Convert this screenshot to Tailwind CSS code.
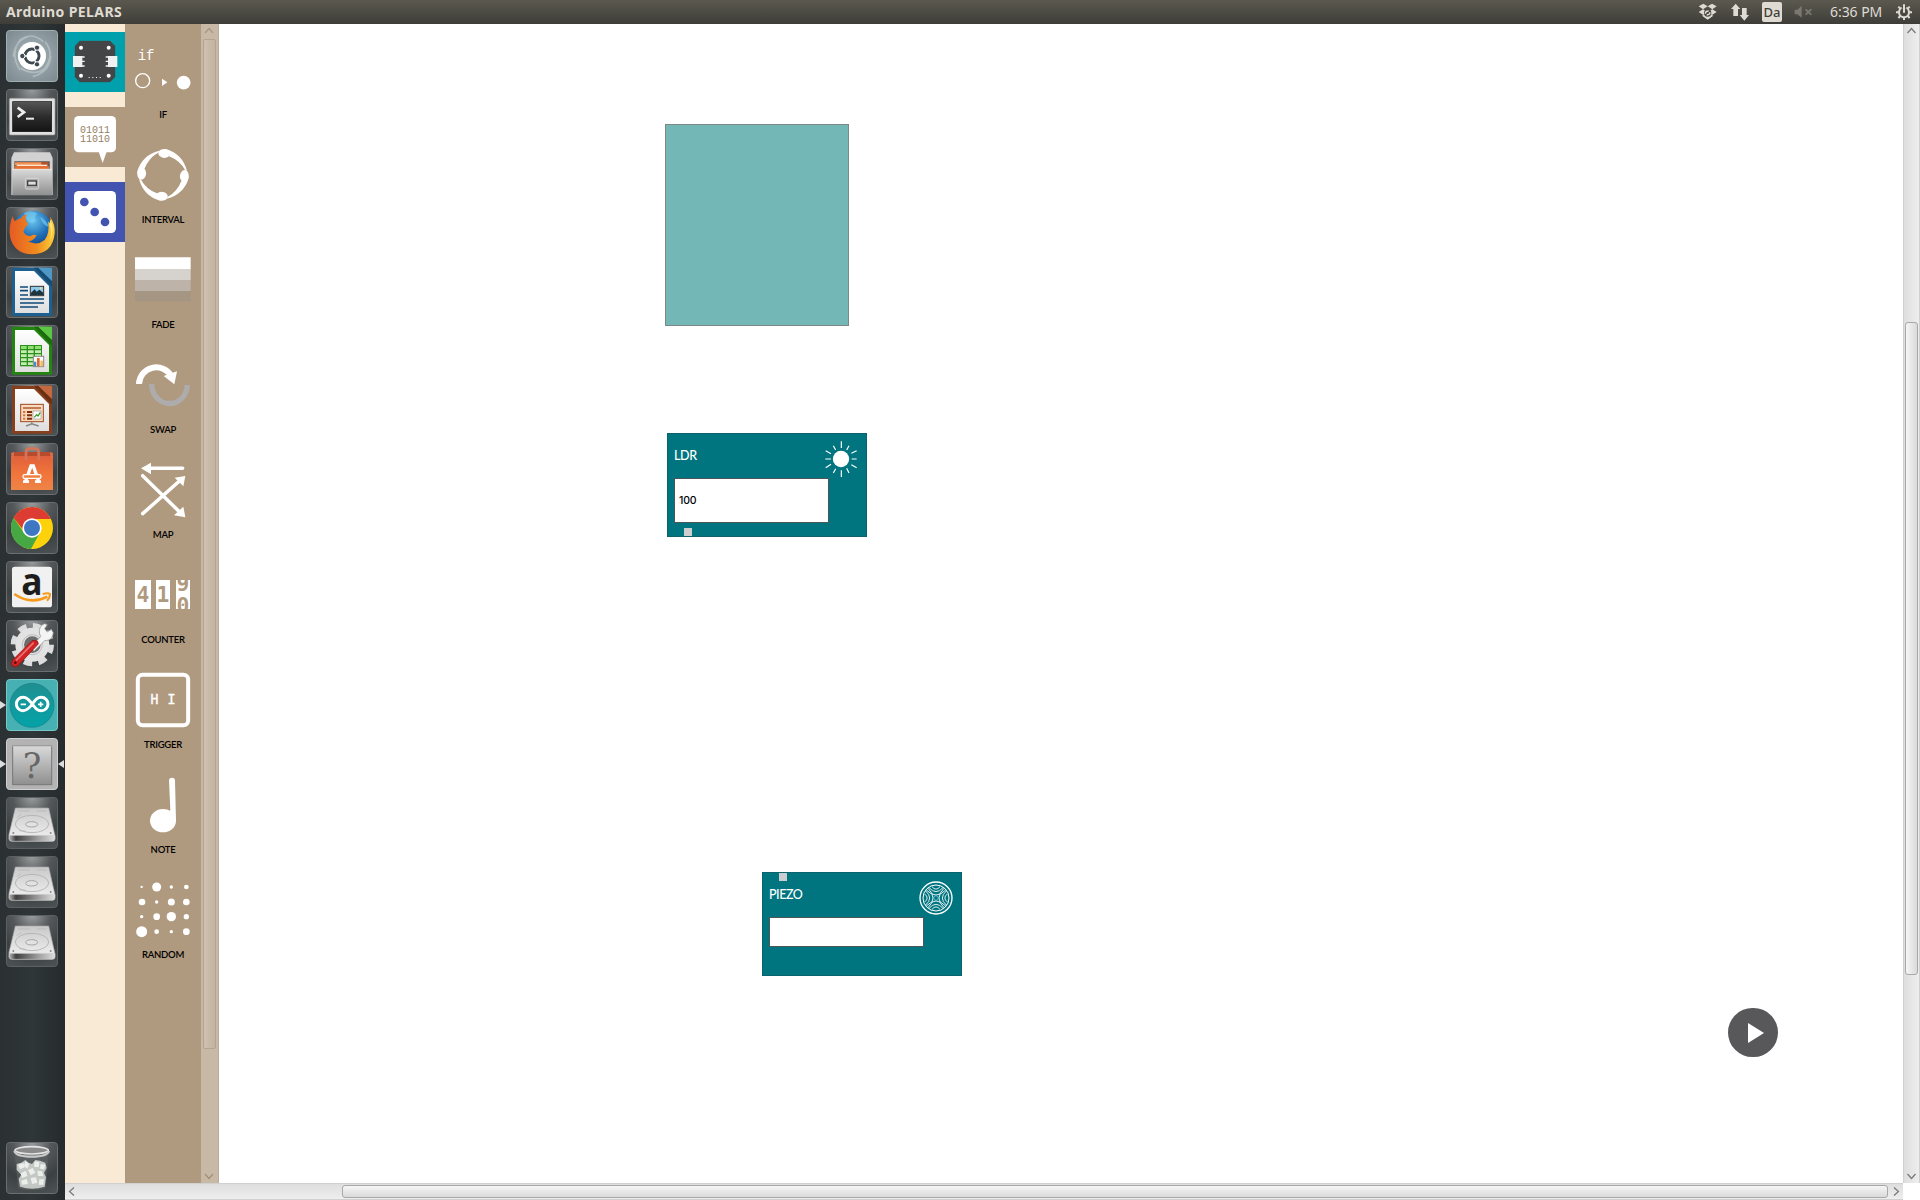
<!DOCTYPE html>
<html lang="en">
<head>
<meta charset="utf-8">
<title>Arduino PELARS</title>
<script src="https://cdn.jsdelivr.net/npm/@tailwindcss/browser@4"></script>
</head>
<body class="w-[1920px] h-[1200px] overflow-hidden bg-white flex flex-col">

<!-- shared gradients and symbols -->
<svg class="absolute w-0 h-0" aria-hidden="true">
  <defs>
    <radialGradient id="tileDark" cx=".5" cy="0" r="1.05"><stop offset="0" stop-color="#9a9d9e"/><stop offset=".35" stop-color="#54585a"/><stop offset=".7" stop-color="#3b4043"/><stop offset="1" stop-color="#4b5052"/></radialGradient>
    <radialGradient id="tileDash" cx=".5" cy=".5" r=".75"><stop offset="0" stop-color="#a9b5b9"/><stop offset="1" stop-color="#77868c"/></radialGradient>
    <linearGradient id="paper" x1="0" y1="0" x2="0" y2="1"><stop offset="0" stop-color="#fff"/><stop offset="1" stop-color="#dedede"/></linearGradient>
    <linearGradient id="plate" x1="0" y1="0" x2="0" y2="1"><stop offset="0" stop-color="#c9c9c9"/><stop offset="1" stop-color="#ececec"/></linearGradient>
    <linearGradient id="metal" x1="0" y1="0" x2="0" y2="1"><stop offset="0" stop-color="#d9d9d9"/><stop offset="1" stop-color="#8f8f8f"/></linearGradient>
    <linearGradient id="screen" x1="0" y1="0" x2="0" y2="1"><stop offset="0" stop-color="#555"/><stop offset=".5" stop-color="#2c2c2c"/><stop offset="1" stop-color="#141414"/></linearGradient>
    <linearGradient id="bag" x1="0" y1="0" x2="0" y2="1"><stop offset="0" stop-color="#e0603c"/><stop offset=".5" stop-color="#f0743a"/><stop offset="1" stop-color="#ef8447"/></linearGradient>
    <radialGradient id="globe" cx=".5" cy=".25" r=".8"><stop offset="0" stop-color="#6bc6f0"/><stop offset=".5" stop-color="#1f6fb8"/><stop offset="1" stop-color="#0e2f6e"/></radialGradient>
    <linearGradient id="fox" x1="0" y1="0" x2="1" y2="0"><stop offset="0" stop-color="#e55b23"/><stop offset=".6" stop-color="#f08b1f"/><stop offset="1" stop-color="#fbd03a"/></linearGradient>
    <linearGradient id="ardu" x1="0" y1="0" x2="0" y2="1"><stop offset="0" stop-color="#1f8f92"/><stop offset="1" stop-color="#03a3a8"/></linearGradient>
    <linearGradient id="front" x1="0" y1="0" x2="1" y2="0"><stop offset="0" stop-color="#bbb"/><stop offset=".15" stop-color="#3f3f3f"/><stop offset=".7" stop-color="#aaa"/><stop offset="1" stop-color="#ddd"/></linearGradient>
    <symbol id="tile" viewBox="0 0 156 156"><rect x="1.5" y="1.5" width="153" height="153" rx="10" fill="url(#tileDark)" stroke="#6a6e70" stroke-width="3"/></symbol>
    <symbol id="disk" viewBox="0 0 156 156">
      <rect x="1.5" y="1.5" width="153" height="153" rx="10" fill="url(#tileDark)" stroke="#5c6062" stroke-width="3"/>
      <path d="M28 33H128L146 112Q147 116 143 117H13Q8 116 9 112Z" fill="url(#plate)" stroke="#a8a8a8" stroke-width="2"/>
      <path d="M9 115H147V126Q146 133 140 133H18Q10 133 9 126Z" fill="url(#front)" stroke="#d8d8d8" stroke-width="2"/>
      <ellipse cx="78" cy="81" rx="50" ry="26" fill="none" stroke="#b0b0b0" stroke-width="2.5"/>
      <ellipse cx="77" cy="82" rx="18" ry="8" fill="#e2e2e2" stroke="#999" stroke-width="2.5"/>
      <path d="M36 42H72M92 42H122M32 62L46 52M60 103L40 101" stroke="#b8b8b8" stroke-width="2.5" fill="none"/>
      <circle cx="22" cy="108" r="3" fill="#888"/><circle cx="134" cy="108" r="3" fill="#888"/>
    </symbol>
  </defs>
</svg>

<!-- panel -->
<header class="h-6 shrink-0 flex items-center justify-between bg-linear-to-b from-[#5b594f] to-[#3e3d38] pl-1.5 pr-2 font-['Noto_Sans',sans-serif] text-[#dfdbd2]">
  <h1 class="text-[14px] leading-6 font-bold tracking-[0.42px]">Arduino PELARS</h1>
  <div class="flex items-center">
    <svg class="w-[20px] h-[18px]" viewBox="116 12 60 54" fill="#dfdbd2"><path d="M132 14L145 22 131 31 118 22ZM158 14L172 22 159 31 145 22ZM118 39L131 31 145 39 132 48ZM172 39L159 31 145 39 158 48ZM128 50L145 42 162 50 145 62Z"/><circle cx="145" cy="42" r="11" fill="#4a4943"/><path d="M138 44Q138 36 148 36M152 40Q152 48 142 48" fill="none" stroke="#dfdbd2" stroke-width="4"/></svg>
    <svg class="ml-[13px] w-[18px] h-[18px]" viewBox="213 10 54 54" fill="#dfdbd2"><path d="M227 12L241 28H234V49H220V28H213ZM253 63L267 46H260V25H246V46H239Z"/></svg>
    <span class="ml-[13px] w-5 h-5 rounded-xs bg-[#dfdbd2] text-[#3f3e39] text-[13px] leading-5 font-medium text-center">Da</span>
    <svg class="ml-3 w-[18px] h-[14px]" viewBox="402 18 54 42" fill="#7b796f"><path d="M404 32H412L425 20V56L412 46H404ZM436 30L440 30 445 35 451 30H455V34L449 39 455 45V48H451L445 43 439 48H436V45L441 39 436 34Z"/></svg>
    <span class="ml-[18px] w-[54px] text-[14px] leading-6 whitespace-nowrap tracking-[-0.05px]">6:36 PM</span>
    <svg class="ml-3 w-4 h-4" viewBox="708 12 48 48" fill="none" stroke="#dfdbd2"><circle cx="732" cy="37" r="15" stroke-width="6"/><path d="M732 18V26" stroke="#4d4b43" stroke-width="14"/><path d="M732 13V38M708 37H716M748 37H756M715 20L721 26M749 20L743 26M715 54L721 48M749 54L743 48M732 53V60" stroke-width="6"/></svg>
  </div>
</header>

<div class="flex flex-1 min-h-0">
  <!-- launcher -->
  <nav class="w-[65px] shrink-0 bg-[#2d3335] bg-linear-to-r from-[#2b3032] via-[#2f3638] to-[#262b2d] flex flex-col items-center justify-between pt-1.5 pb-1.5 pr-px relative">
    <div class="flex flex-col gap-[7px]">
      <svg class="w-[52px] h-[52px]" viewBox="18 90 156 156"><rect x="19.500" y="91.500" width="153" height="153" rx="10" fill="url(#tileDash)" stroke="#a3aeb2" stroke-width="3"/><g fill="none" stroke="#cad2d5" stroke-opacity=".55" stroke-width="5"><path d="M60 210Q28 160 62 118Q95 95 130 125M135 125Q165 160 135 205Q105 230 62 205M40 170Q45 120 90 108M152 168Q150 215 98 230"/></g><circle cx="96" cy="168" r="42" fill="#fff"/><circle cx="96" cy="168" r="21" fill="none" stroke="#3e4a4f" stroke-width="9"/><g stroke="#fff" stroke-width="4"><path d="M96 168L65 168M96 168L113 140M96 168L113 196"/></g><circle cx="96" cy="168" r="16" fill="#fff"/><g fill="#3e4a4f" stroke="#fff" stroke-width="3"><circle cx="67" cy="168" r="8"/><circle cx="111" cy="143" r="8"/><circle cx="111" cy="193" r="8"/></g></svg>
      <svg class="w-[52px] h-[52px]" viewBox="18 267 156 156"><use href="#tile" x="18" y="267" width="156" height="156"/><rect x="28" y="295" width="137" height="110" rx="4" fill="#e0e0e0" stroke="#999" stroke-width="2"/><rect x="38" y="305" width="117" height="90" fill="url(#screen)" stroke="#111" stroke-width="2"/><path d="M53 323L72 337 53 351" fill="none" stroke="#eee" stroke-width="8"/><path d="M78 356H102" stroke="#eee" stroke-width="6"/></svg>
      <svg class="w-[52px] h-[52px]" viewBox="18 444 156 156"><use href="#tile" x="18" y="444" width="156" height="156"/><path d="M42 457H150L158 474V585H34V474Z" fill="#d2d2d2"/><rect x="43" y="484" width="106" height="34" fill="#4a4a4a"/><rect x="46" y="486" width="100" height="9" fill="#b0522f"/><rect x="44" y="487" width="80" height="9" fill="#f0945a"/><rect x="44" y="498" width="103" height="12" fill="#e56f33"/><rect x="50" y="494" width="92" height="4" fill="#fbe6cf"/><rect x="37" y="508" width="119" height="78" fill="url(#metal)"/><path d="M37 508H156" stroke="#eee" stroke-width="3"/><rect x="76" y="535" width="40" height="32" rx="5" fill="#aaa" stroke="#d8d8d8" stroke-width="3"/><rect x="83" y="543" width="26" height="13" fill="#ddd" stroke="#444" stroke-width="4"/></svg>
      <svg class="w-[52px] h-[52px]" viewBox="18 621 156 156"><use href="#tile" x="18" y="621" width="156" height="156"/><circle cx="98" cy="692" r="60" fill="url(#globe)"/><path d="M72 640Q90 628 112 640Q100 652 108 662Q92 676 80 660ZM120 650Q140 660 146 680Q128 676 120 650Z" fill="#7fd0f0" opacity=".6"/><path d="M38 648Q40 660 45 664Q52 656 64 655Q66 646 80 643Q75 652 77 662Q84 668 84 674Q78 678 74 684Q74 692 70 694Q74 708 92 708Q100 702 110 706Q100 724 84 724Q112 738 134 720Q150 700 144 664Q150 670 152 676Q156 668 150 650Q166 672 164 700Q158 762 98 763Q46 764 31 715Q24 680 38 648Z" fill="url(#fox)"/><path d="M152 658Q166 690 148 728Q158 700 148 672Z" fill="#ffe37a"/></svg>
      <svg class="w-[52px] h-[52px]" viewBox="18 108 156 156"><use href="#tile" x="18" y="108" width="156" height="156"/><path d="M36 116Q36 113 40 113H153Q156 113 156 117V254Q156 258 152 258H40Q36 258 36 254Z" fill="#1d5f8f"/><path d="M114 113H156V154Z" fill="#4f97c4"/><path d="M114 113L156 154V170L102 113Z" fill="#174c73"/><path d="M45 123H102L147 168V249H45Z" fill="url(#paper)"/><path d="M60 171H84M60 182H84M60 195H84M60 207H132M60 219H132M60 231H114" stroke="#0f4a78" stroke-width="5"/><rect x="91" y="169" width="40" height="28" fill="#8dcaf0" stroke="#333" stroke-width="3"/><path d="M93 195V188L104 178 110 185 118 179 130 188V195Z" fill="#1e3440"/><circle cx="122" cy="175" r="3" fill="#ffe56b"/></svg>
      <svg class="w-[52px] h-[52px]" viewBox="18 285 156 156"><use href="#tile" x="18" y="285" width="156" height="156"/><rect x="36" y="290" width="120" height="144" rx="4" fill="#23850f"/><path d="M114 290H156V331Z" fill="#5cc744"/><path d="M114 290L156 331V347L102 290Z" fill="#1c6b0e"/><path d="M45 300H102L147 345V426H45Z" fill="url(#paper)"/><rect x="60" y="345" width="66" height="64" fill="#2d8f1c"/><g fill="#c3edb2"><path d="M63 348h17v9h-17zM84 348h17v9h-17zM105 348h18v9h-18z" fill="#8fe070"/><path d="M63 361h17v8h-17zM84 361h17v8h-17zM105 361h18v8h-18zM63 373h17v8h-17zM84 373h17v8h-17zM105 373h18v8h-18zM63 385h17v8h-17zM84 385h17v8h-17zM63 397h17v8h-17zM84 397h17v8h-17z"/></g><rect x="100" y="379" width="31" height="31" fill="#fff" stroke="#888" stroke-width="3"/><path d="M102 395h7v14h-7z" fill="#3f8ed0"/><path d="M111 384h8v25h-8z" fill="#e0662e"/><path d="M121 392h8v17h-8z" fill="#f0c060"/></svg>
      <svg class="w-[52px] h-[52px]" viewBox="18 462 156 156"><use href="#tile" x="18" y="462" width="156" height="156"/><rect x="36" y="467" width="120" height="144" rx="4" fill="#87401d"/><path d="M114 467H156V508Z" fill="#c4693f"/><path d="M114 467L156 508V524L102 467Z" fill="#6b3013"/><path d="M45 477H102L147 522V603H45Z" fill="url(#paper)"/><rect x="62" y="523" width="68" height="52" fill="#fbd9bd" stroke="#9c4a22" stroke-width="3"/><path d="M69 534H123" stroke="#b5693f" stroke-width="5"/><path d="M69 546h7M69 556h7M69 566h7" stroke="#d07a4a" stroke-width="6"/><path d="M81 546h15M81 556h15M81 566h15" stroke="#7d2f10" stroke-width="6"/><rect x="99" y="543" width="24" height="24" fill="#fff" stroke="#999" stroke-width="2"/><path d="M103 562L110 554 114 558 121 547" fill="none" stroke="#3f9a2c" stroke-width="4"/><path d="M95 577V582L78 588M97 582L116 588" fill="none" stroke="#888" stroke-width="5"/></svg>
      <svg class="w-[52px] h-[52px]" viewBox="18 9 156 156"><use href="#tile" x="18" y="9" width="156" height="156"/><path d="M34 40L44 36H150L158 40V56H34Z" fill="#b84a2e"/><path d="M33 48H159V150H33Z" fill="url(#bag)"/><path d="M33 40L42 36 40 64ZM159 40L150 36 154 64Z" fill="#e4704a"/><path d="M78 60V38Q78 26 88 26H106Q116 26 116 38V60" fill="none" stroke="#d4755a" stroke-width="8"/><path d="M76 127L93 78H100L117 127" fill="none" stroke="#fff" stroke-width="10"/><path d="M69 125H87M105 125H123" stroke="#fff" stroke-width="8"/><rect x="69" y="104" width="54" height="11" rx="5" fill="#f27f3f" stroke="#fff" stroke-width="4"/></svg>
      <svg class="w-[52px] h-[52px]" viewBox="18 186 156 156"><use href="#tile" x="18" y="186" width="156" height="156"/><circle cx="96" cy="264" r="63" fill="#fdd20a"/><path d="M72 278L41 233A63 63 0 0 0 93 327L119 279Z" fill="#45a844"/><path d="M41 233A63 63 0 0 1 153 237H96Q75 240 70 270Z" fill="#dd3c33"/><circle cx="96" cy="264" r="29" fill="#fff"/><circle cx="96" cy="264" r="24" fill="#3f78c2"/></svg>
      <svg class="w-[52px] h-[52px] overflow-visible" viewBox="18 363 156 156"><use href="#tile" x="18" y="363" width="156" height="156"/><rect x="36" y="380" width="120" height="122" rx="8" fill="#f1f1f1"/><text x="64" y="464" font-family="Open Sans, sans-serif" font-weight="700" font-size="114" fill="#1d1d1d" textLength="64" lengthAdjust="spacingAndGlyphs">a</text><path d="M43 462Q92 496 142 470" fill="none" stroke="#f79a1b" stroke-width="8"/><path d="M128 462Q144 458 150 462Q150 474 141 482" fill="none" stroke="#f79a1b" stroke-width="6"/></svg>
      <svg class="w-[52px] h-[52px]" viewBox="18 540 156 156"><use href="#tile" x="18" y="540" width="156" height="156"/><circle cx="97" cy="614" r="54" fill="none" stroke="#dcdcdc" stroke-width="22" stroke-dasharray="24 18.410"/><circle cx="97" cy="614" r="38" fill="#6c6c6c" stroke="#e2e2e2" stroke-width="26"/><circle cx="97" cy="614" r="30" fill="none" stroke="#bbb" stroke-width="3"/><path d="M90 622L122 590Q112 570 126 555Q134 548 142 554L134 566 142 576 154 568 160 578Q158 602 134 602L102 634Z" fill="#f4f4f4" stroke="#888" stroke-width="2"/><path d="M106 601Q115 602 115 612L54 677Q44 684 37 677Q30 669 38 660L96 602Z" fill="#cf2424" stroke="#8c1010" stroke-width="2"/><path d="M101 608L48 662" stroke="#f07070" stroke-width="5"/><circle cx="46" cy="668" r="4" fill="#5e0a0a"/></svg>
      <svg class="w-[52px] h-[52px]" viewBox="18 57 156 156"><rect x="19.500" y="58.500" width="153" height="153" rx="10" fill="#47b0b3" stroke="#77c8ca" stroke-width="3"/><circle cx="96" cy="136" r="66" fill="url(#ardu)" stroke="#177f83" stroke-width="2"/><path d="M97 132C85 118 80 112 69 112A20 20 0 0 0 69 152C80 152 87 146 97 132C107 118 112 112 124 112A20 20 0 0 1 124 152C112 152 107 146 97 132Z" fill="none" stroke="#fff" stroke-width="9"/><path d="M62 133H78M114 133H130M122 125V141" stroke="#fff" stroke-width="5"/></svg>
      <svg class="w-[52px] h-[52px]" viewBox="18 234 156 156"><rect x="19.500" y="235.500" width="153" height="153" rx="10" fill="#b3b3b3" stroke="#d0d0d0" stroke-width="3"/><rect x="38" y="258" width="117" height="116" fill="url(#metal)" stroke="#777" stroke-width="3"/><path d="M38 259H155" stroke="#e2e2e2" stroke-width="2"/><text x="96" y="354" font-family="DejaVu Serif, serif" font-size="104" fill="#666" text-anchor="middle">?</text></svg>
      <svg class="w-[52px] h-[52px]"><use href="#disk" width="52" height="52"/></svg>
      <svg class="w-[52px] h-[52px]"><use href="#disk" width="52" height="52"/></svg>
      <svg class="w-[52px] h-[52px]"><use href="#disk" width="52" height="52"/></svg>
    </div>
    <svg class="w-[52px] h-[52px]" viewBox="18 606 156 156"><use href="#tile" x="18" y="606" width="156" height="156"/><path d="M44 640H146L138 742Q136 751 96 751Q56 751 54 742Z" fill="#5d6264" fill-opacity=".6"/><path d="M50 672L64 668 76 660 86 668 96 672 106 660 120 662 136 668 140 684 132 698 138 712 134 740Q96 752 60 740L56 716 64 704 50 690Z" fill="#c4c8c4"/><g fill="#eceeec"><path d="M54 674L70 668 74 682 60 688ZM76 664L88 672 82 686 72 678ZM104 664L118 666 116 682 102 680ZM122 672L136 674 132 688 120 686ZM84 690L98 684 106 698 92 706ZM62 700L78 692 82 708 66 714ZM112 692L126 694 130 708 114 708ZM64 722L80 716 84 732 66 734ZM92 714L108 712 112 728 96 732ZM118 718L132 718 130 734 116 734Z"/></g><ellipse cx="95" cy="631" rx="50" ry="11" fill="#8b8b8b" stroke="#e6e6e6" stroke-width="5"/><path d="M43 633Q48 650 95 650T147 633" fill="none" stroke="#c9c9c9" stroke-width="7"/></svg>
    <!-- running / focused markers -->
    <svg class="absolute left-0 top-[676px] w-1.5 h-2.5" viewBox="0 0 5 10" preserveAspectRatio="none"><path d="M0 1L5 5 0 9Z" fill="#ddd"/></svg>
    <svg class="absolute left-0 top-[735px] w-1.5 h-2.5" viewBox="0 0 5 10" preserveAspectRatio="none"><path d="M0 1L5 5 0 9Z" fill="#ddd"/></svg>
    <svg class="absolute right-px top-[735px] w-1.5 h-2.5" viewBox="0 0 5 10" preserveAspectRatio="none"><path d="M5 1L0 5 5 9Z" fill="#ddd"/></svg>
  </nav>

  <div class="flex-1 min-w-0 flex flex-col">
    <div class="flex flex-1 min-h-0">
      <!-- categories -->
      <div class="w-[60px] shrink-0 bg-[#f9ead6] pt-2 flex flex-col gap-[15px]">
        <svg class="w-[60px] h-[60px] bg-[#00a1ac]" viewBox="195 96 180 180"><path d="M239 123H330L345 138V231L330 246H239L225 231V138Z" fill="#444547" stroke="#444547" stroke-linejoin="round"/><rect x="219" y="168" width="28" height="33" fill="#f1f1f1"/><rect x="324" y="168" width="28" height="33" fill="#f1f1f1"/><path d="M245 171h9M245 184h9M245 198h9M317 171h9M317 184h9M317 198h9" stroke="#f1f1f1" stroke-width="4"/><g fill="#fff"><circle cx="243" cy="143" r="6"/><circle cx="326" cy="143" r="6"/><circle cx="243" cy="227" r="6"/><circle cx="326" cy="227" r="6"/><path d="M266 231h3v3h-3zM277 231h3v3h-3zM288 231h3v3h-3zM299 231h3v3h-3z"/></g></svg>
        <svg class="w-[60px] h-[60px] bg-[#b09a7f]" viewBox="195 321 180 180"><rect x="222" y="348" width="126" height="109" rx="14" fill="#fff"/><path d="M296 455H320L308 489Z" fill="#fff"/><g font-family="Liberation Mono, monospace" font-size="32" fill="#94805f"><text x="240" y="398" textLength="90" lengthAdjust="spacingAndGlyphs">01011</text><text x="240" y="426" textLength="90" lengthAdjust="spacingAndGlyphs">11010</text></g></svg>
        <svg class="w-[60px] h-[60px] bg-[#4353b0]" viewBox="195 546 180 180"><rect x="222" y="573" width="126" height="126" rx="14" fill="#fff"/><g fill="#4353b0"><circle cx="253" cy="606" r="13"/><circle cx="284" cy="636" r="13"/><circle cx="315" cy="666" r="13"/></g></svg>
      </div>

      <!-- block palette -->
      <div class="w-[76px] shrink-0 bg-[#b09a7f] font-['Lato',sans-serif] text-[9.5px] leading-3 font-semibold text-black text-center tracking-[-0.25px]">
        <div class="h-[105px] flex flex-col"><svg class="w-[76px] h-[85px] tracking-normal" viewBox="375 72 228 255"><text x="413" y="180" font-family="Liberation Mono, monospace" font-weight="400" font-size="42" fill="#fff">if</text><circle cx="428" cy="242" r="21" fill="none" stroke="#fff" stroke-width="4"/><path d="M486 236L502 247 486 258Z" fill="#fff"/><circle cx="551" cy="248" r="20.500" fill="#fff"/></svg><span>IF</span></div>
        <div class="h-[105px] flex flex-col"><svg class="w-[76px] h-[85px]" viewBox="375 387 228 255" fill="#fff"><defs><path id="swoosh" d="M475 456Q480 446 498 447Q548 462 561 513L555 510Q540 482 507 469Q496 477 485 472Q473 466 475 456Z"/></defs><use href="#swoosh"/><use href="#swoosh" transform="rotate(90 489 524.500)"/><use href="#swoosh" transform="rotate(180 489 524.500)"/><use href="#swoosh" transform="rotate(270 489 524.500)"/></svg><span>INTERVAL</span></div>
        <div class="h-[105px] flex flex-col"><svg class="w-[76px] h-[85px]" viewBox="375 702 228 255"><path d="M405 772h167v36H405z" fill="#fff"/><path d="M405 807h167v33H405z" fill="#d6d2cd"/><path d="M405 840h167v33H405z" fill="#bdb3a9"/><path d="M405 873h167v31H405z" fill="#a59583"/></svg><span>FADE</span></div>
        <div class="h-[105px] flex flex-col"><svg class="w-[76px] h-[85px]" viewBox="375 1017 228 255"><path d="M455 1152A53.500 57 0 0 0 562 1155" fill="none" stroke="#adabac" stroke-width="16"/><path d="M417 1152A52 52 0 0 1 514 1128" fill="none" stroke="#fff" stroke-width="18"/><path d="M491 1128L531 1114 523 1153Z" fill="#fff"/></svg><span>SWAP</span></div>
        <div class="h-[105px] flex flex-col"><svg class="w-[76px] h-[85px]" viewBox="375 1332 228 255"><g stroke="#fff" stroke-width="10.500" stroke-linecap="round"><path d="M548 1405H445M428 1427L545 1542M428 1541L545 1437"/></g><path d="M423 1405L453 1388V1423ZM556 1552L550 1520 522 1546ZM556 1428L524 1433 550 1459Z" fill="#fff"/></svg><span>MAP</span></div>
        <div class="h-[105px] flex flex-col"><svg class="w-[76px] h-[85px] tracking-normal" viewBox="375 1647 228 255"><defs><clipPath id="reel"><path d="M528 1740h42v87h-42z"/></clipPath></defs><path d="M405 1740h48v87h-48zM468 1740h42v87h-42zM528 1740h42v87h-42z" fill="#fff"/><g font-family="DejaVu Sans Mono, monospace" font-weight="700" font-size="64" fill="#b09a7f" text-anchor="middle"><text x="429" y="1807">4</text><text x="489" y="1807">1</text><g clip-path="url(#reel)"><text x="549" y="1773">9</text><text x="549" y="1838">0</text></g></g></svg><span>COUNTER</span></div>
        <div class="h-[105px] flex flex-col"><svg class="w-[76px] h-[85px] tracking-normal" viewBox="375 1962 228 255"><rect x="413.500" y="2024.500" width="151" height="151" rx="14" fill="none" stroke="#fff" stroke-width="12"/><text x="451" y="2112" font-family="Liberation Mono, monospace" font-weight="400" font-size="42" fill="#fff" stroke="#fff" stroke-width="1">H I</text></svg><span>TRIGGER</span></div>
        <div class="h-[105px] flex flex-col"><svg class="w-[76px] h-[85px]" viewBox="375 2277 228 255"><ellipse cx="489" cy="2462" rx="39" ry="35" fill="#fff"/><path d="M507 2340Q508 2333 516 2333Q525 2333 525 2342L528 2464 500 2450 511 2430Z" fill="#fff"/></svg><span>NOTE</span></div>
        <div class="h-[105px] flex flex-col"><svg class="w-[76px] h-[85px]" viewBox="375 2592 228 255" fill="#fff"><circle cx="425" cy="2661" r="3.500"/><circle cx="470" cy="2661" r="13.500"/><circle cx="514" cy="2661" r="5"/><circle cx="559" cy="2661" r="7"/><circle cx="426" cy="2706" r="10"/><circle cx="470" cy="2706" r="5"/><circle cx="514" cy="2706" r="10.500"/><circle cx="559" cy="2706" r="10"/><circle cx="425" cy="2750" r="5"/><circle cx="470" cy="2750" r="10"/><circle cx="514" cy="2750" r="14"/><circle cx="559" cy="2750" r="8"/><circle cx="425" cy="2795" r="16.500"/><circle cx="470" cy="2795" r="7"/><circle cx="514" cy="2795" r="5"/><circle cx="559" cy="2795" r="10"/></svg><span>RANDOM</span></div>
      </div>

      <!-- palette scrollbar -->
      <div class="w-[18px] shrink-0 bg-[#c8b9a7] border-r border-[#b9aa99] flex flex-col items-center">
        <svg class="w-[17px] h-[15px] shrink-0" viewBox="0 0 17 15"><path d="M4 9L8 4.500 12 9" fill="none" stroke="#a8967f" stroke-width="1.200"/></svg>
        <div class="w-[13px] h-[1010px] shrink-0 rounded-xs border border-[#b4a48f] bg-linear-to-r from-[#cfc1b0] to-[#c3b3a0]"></div>
        <div class="flex-1"></div>
        <svg class="w-[17px] h-[15px] shrink-0" viewBox="0 0 17 15"><path d="M4 6L8 10.500 12 6" fill="none" stroke="#a08e76" stroke-width="1.200"/></svg>
      </div>

      <!-- canvas -->
      <main class="flex-1 min-w-0 relative bg-white font-['Lato',sans-serif]">
        <div class="absolute left-[446px] top-[100px] w-[184px] h-[202px] bg-[#74b7b7] border border-[#7c8787]"></div>

        <section class="absolute left-[448px] top-[409px] w-[200px] h-[104px] bg-[#00747f] border border-[#0b626b]">
          <div class="flex justify-between pl-1.5 pr-[9px] h-[44px]">
            <h2 class="pt-[13px] text-[12.5px] leading-[18px] font-medium text-white tracking-[-0.35px]">LDR</h2>
            <svg class="mt-[7px] w-8 h-[37px]" viewBox="525 62 96 111"><circle cx="573" cy="116" r="24.500" fill="#fff"/><path d="M574 63V83M574 150V170M526 116H543M605 116H620M527 91L543 100M604 133L620 142M527 142L543 132M604 99L620 91M550 76L557 89M590 144L597 158M550 158L557 145M590 89L597 76" stroke="#fff" stroke-width="3.500" fill="none"/></svg>
          </div>
          <div class="ml-1.5 w-[155px] h-[45px] bg-white border border-[#4c5558] pl-1 flex items-center font-['Inter',sans-serif] text-[10.5px] font-medium tracking-[-0.2px] text-black">100</div>
          <div class="ml-4 mt-[5px] w-2 h-2 bg-[#cdcdcf]"></div>
        </section>

        <section class="absolute left-[543px] top-[848px] w-[200px] h-[104px] bg-[#00747f] border border-[#0b626b]">
          <div class="absolute left-4 top-0 w-2 h-2 bg-[#cdcdcf]"></div>
          <div class="flex justify-between pl-1.5 pr-2 h-[44px]">
            <h2 class="pt-[13px] text-[12.5px] leading-[18px] font-medium text-white tracking-[-0.45px]">PIEZO</h2>
            <svg class="mt-2 w-[34px] h-[34px]" viewBox="0 0 102 102" fill="none" stroke="#fff" stroke-width="3"><circle cx="51" cy="51" r="48" stroke-width="4"/><circle cx="51" cy="51" r="39"/><path d="M22 27Q51 57 80 27M22 75Q51 45 80 75M27 22Q57 51 27 80M75 22Q45 51 75 80M30 20Q51 44 72 20M30 82Q51 58 72 82M20 30Q44 51 20 72M82 30Q58 51 82 72M39 17Q51 32 63 17M39 85Q51 70 63 85M17 39Q32 51 17 63M85 39Q70 51 85 63" stroke-width="2.600"/><circle cx="51" cy="51" r="7" stroke="#69c6d0"/></svg>
          </div>
          <div class="ml-1.5 w-[155px] h-[30px] bg-white border border-[#4c5558]"></div>
        </section>

        <button class="absolute left-[1509px] top-[984px] w-[50px] h-[49px] rounded-full bg-[#58585a] flex items-center justify-center" aria-label="Run"><svg class="w-4 h-5 ml-1.5" viewBox="0 0 16 20"><path d="M0 0L16 10 0 20Z" fill="#fff"/></svg></button>
      </main>

      <!-- vertical scrollbar -->
      <div class="w-[17px] shrink-0 bg-linear-to-r from-[#dedede] to-[#eeeeee] border-x border-[#d0d0d0] flex flex-col items-center">
        <svg class="w-[15px] h-[15px] shrink-0" viewBox="0 0 15 15"><path d="M3.500 9L7.500 4.500 11.500 9" fill="none" stroke="#777" stroke-width="1.200"/></svg>
        <div class="mt-[283px] w-[13px] h-[653px] shrink-0 rounded-[3px] border border-[#a8a8a8] bg-linear-to-r from-[#f6f6f6] to-[#dadada]"></div>
        <div class="flex-1"></div>
        <svg class="w-[15px] h-[15px] shrink-0" viewBox="0 0 15 15"><path d="M3.500 6L7.500 10.500 11.500 6" fill="none" stroke="#777" stroke-width="1.200"/></svg>
      </div>
    </div>

    <!-- horizontal scrollbar -->
    <div class="h-[17px] shrink-0 mr-[17px] bg-linear-to-b from-[#dedede] to-[#eeeeee] border-y border-[#d0d0d0] flex items-center justify-between">
      <svg class="w-[15px] h-[15px]" viewBox="0 0 15 15"><path d="M9 3.500L4.500 7.500 9 11.500" fill="none" stroke="#777" stroke-width="1.200"/></svg>
      <div class="flex-1"></div>
      <div class="w-[1546px] h-[13px] rounded-[3px] border border-[#a8a8a8] bg-linear-to-b from-[#f6f6f6] to-[#dadada]"></div>
      <svg class="w-[15px] h-[15px]" viewBox="0 0 15 15"><path d="M6 3.500L10.500 7.500 6 11.500" fill="none" stroke="#777" stroke-width="1.200"/></svg>
    </div>
  </div>
</div>
</body>
</html>
